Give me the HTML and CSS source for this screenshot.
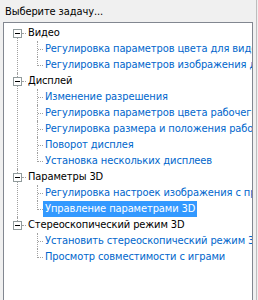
FILE: index.html
```html
<!DOCTYPE html>
<html lang="ru">
<head>
<meta charset="utf-8">
<link rel="stylesheet" href="styles.css">
</head>
<body>
<div class="panel">
  <div class="title">Выберите задачу...</div>
  <div class="tree">
    <ul class="roots">
      <li class="root">
        <div class="row"><span class="box"></span><span class="label">Видео</span></div>
        <ul class="kids">
          <li class="kid"><div class="row"><span class="label link">Регулировка параметров цвета для видео</span></div></li>
          <li class="kid"><div class="row"><span class="label link">Регулировка параметров изображения для видео</span></div></li>
        </ul>
      </li>
      <li class="root">
        <div class="row"><span class="box"></span><span class="label">Дисплей</span></div>
        <ul class="kids">
          <li class="kid"><div class="row"><span class="label link">Изменение разрешения</span></div></li>
          <li class="kid"><div class="row"><span class="label link">Регулировка параметров цвета рабочего стола</span></div></li>
          <li class="kid"><div class="row"><span class="label link">Регулировка размера и положения рабочего стола</span></div></li>
          <li class="kid"><div class="row"><span class="label link">Поворот дисплея</span></div></li>
          <li class="kid"><div class="row"><span class="label link">Установка нескольких дисплеев</span></div></li>
        </ul>
      </li>
      <li class="root">
        <div class="row"><span class="box"></span><span class="label">Параметры 3D</span></div>
        <ul class="kids">
          <li class="kid"><div class="row"><span class="label link">Регулировка настроек изображения с просмотром</span></div></li>
          <li class="kid"><div class="row"><span class="label link selected">Управление параметрами 3D</span></div></li>
        </ul>
      </li>
      <li class="root">
        <div class="row"><span class="box"></span><span class="label">Стереоскопический режим 3D</span></div>
        <ul class="kids">
          <li class="kid"><div class="row"><span class="label link">Установить стереоскопический режим 3D</span></div></li>
          <li class="kid"><div class="row"><span class="label link">Просмотр совместимости с играми</span></div></li>
        </ul>
      </li>
    </ul>
  </div>
</div>
</body>
</html>
```

FILE: styles.css
```css
html, body {
  margin: 0;
  padding: 0;
  background: #f0f0f0;
}
body {
  font-family: "DejaVu Sans Condensed", "DejaVu Sans", sans-serif;
  font-stretch: condensed;
  font-size: 11px;
  letter-spacing: -0.1px;
  color: #000;
  width: 258px;
  height: 300px;
  overflow: hidden;
}
.panel {
  width: 256px;
  height: 300px;
  border-right: 1px solid #bdbdbd;
}
.title {
  height: 22px;
  line-height: 22px;
  padding-left: 5px;
  padding-top: 1px;
  box-sizing: border-box;
}
.tree {
  margin-left: 3px;
  width: 250px;
  height: 290px;
  box-sizing: border-box;
  border: 1px solid #828790;
  background: #fff;
  overflow: hidden;
  padding-top: 2px;
}
ul {
  list-style: none;
  margin: 0;
  padding: 0;
}
.row {
  height: 16px;
  display: flex;
  align-items: center;
  white-space: nowrap;
  position: relative;
}
.root {
  position: relative;
}
.root::before {
  content: "";
  position: absolute;
  left: 13px;
  top: 0;
  bottom: 0;
  border-left: 1px dotted #a0a0a0;
}
.root:first-child::before {
  top: 8px;
}
.root:last-child::before {
  bottom: auto;
  height: 8px;
}
.root > .row {
  padding-left: 9px;
}
.box {
  width: 9px;
  height: 9px;
  box-sizing: border-box;
  border: 1px solid #919b9c;
  background: #fff;
  position: relative;
  flex: none;
  z-index: 1;
}
.box::after {
  content: "";
  position: absolute;
  left: 1px;
  top: 3px;
  width: 5px;
  height: 1px;
  background: #000;
}
.root > .row .box + .label::before {
  content: "";
  position: absolute;
  left: 18px;
  top: 8px;
  width: 4px;
  border-top: 1px dotted #a0a0a0;
}
.label {
  padding: 0 2px;
  line-height: 16px;
}
.root > .row .label {
  margin-left: 4px;
}
.kid {
  position: relative;
}
.kid::before {
  content: "";
  position: absolute;
  left: 33px;
  top: 0;
  bottom: 0;
  border-left: 1px dotted #a0a0a0;
}
.kid:last-child::before {
  bottom: auto;
  height: 9px;
}
.kid > .row {
  padding-left: 39px;
}
.kid > .row::before {
  content: "";
  position: absolute;
  left: 34px;
  top: 8px;
  width: 5px;
  border-top: 1px dotted #a0a0a0;
}
.link {
  color: #0066cc;
}
.selected {
  background: #3399ff;
  color: #fff;
}
```
